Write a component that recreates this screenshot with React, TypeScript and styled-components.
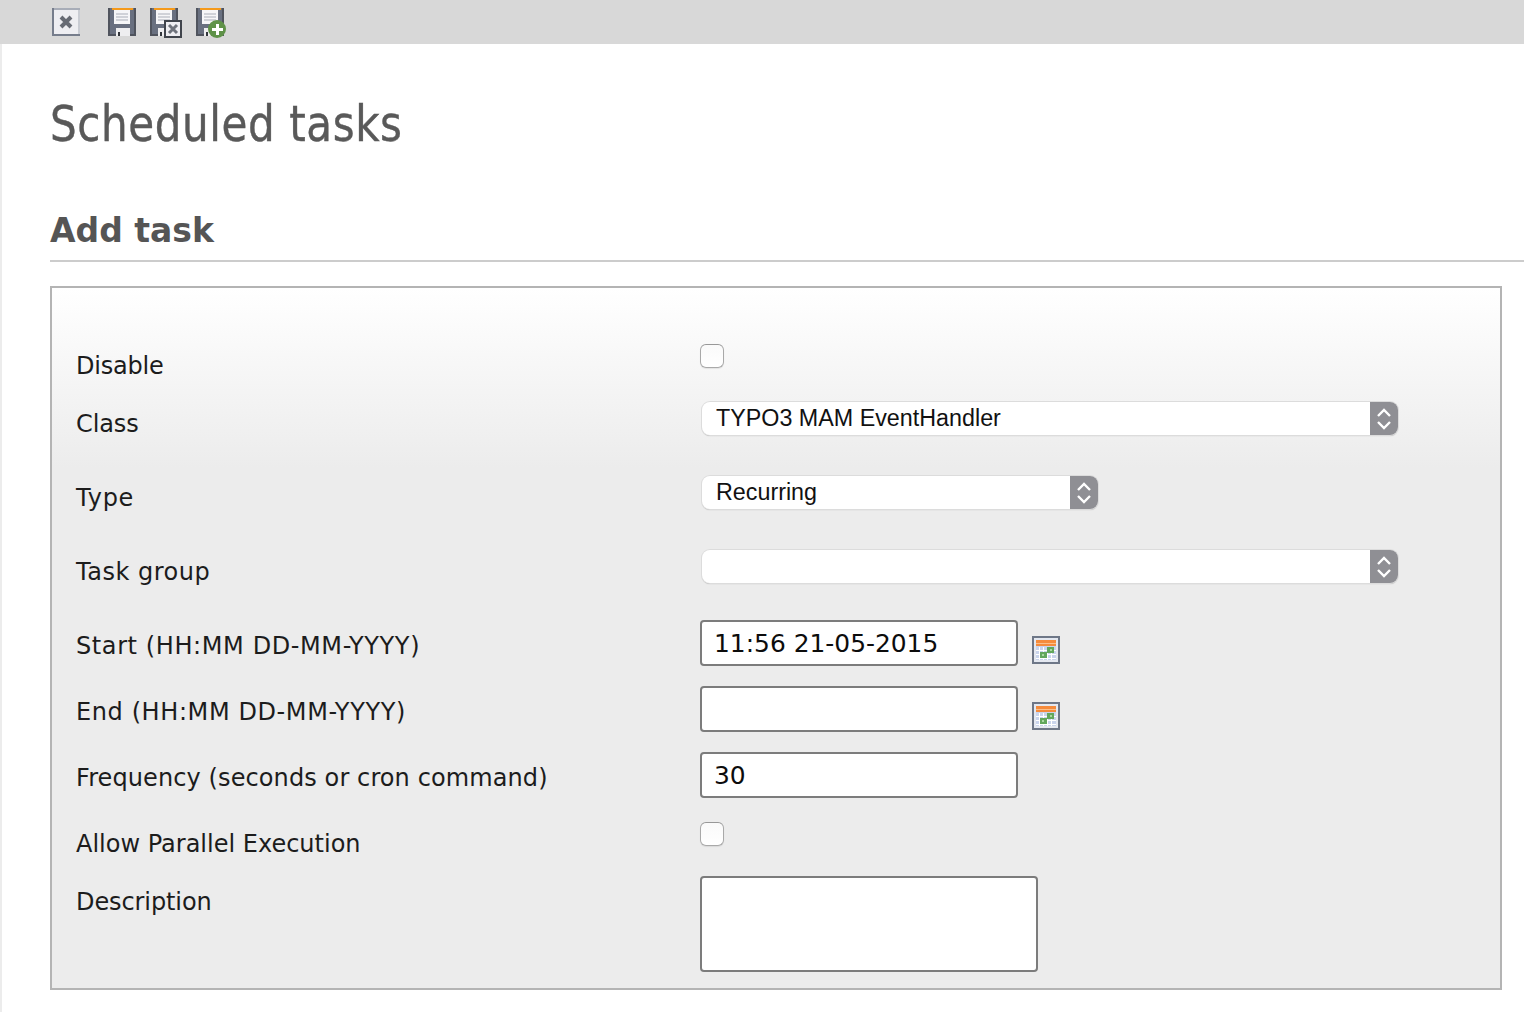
import React from "react";
import styled, { createGlobalStyle } from "styled-components";

const Global = createGlobalStyle`
  html, body { margin: 0; padding: 0; background: #fff; }
  body { font-family: "DejaVu Sans", Verdana, sans-serif; color: #111; overflow: hidden; }
`;

const Page = styled.div`
  width: 1524px;
  height: 1012px;
  display: flex;
  flex-direction: column;
  overflow: hidden;
`;

const Toolbar = styled.div`
  height: 44px;
  flex: none;
  background: #d8d8d8;
  display: flex;
  align-items: flex-start;
  padding: 8px 0 0 52px;
  box-sizing: border-box;
  gap: 14px;
`;

const CloseButton = styled.svg`
  display: block;
  margin-right: 14px;
`;

const ToolIcon = styled.svg`
  display: block;
`;

const Content = styled.div`
  flex: 1;
  border-left: 2px solid #ececec;
  padding-left: 48px;
  display: flex;
  flex-direction: column;
`;

const Title = styled.h1`
  margin: 53px 0 0;
  height: 54px;
  font-family: "DejaVu Sans Condensed", "DejaVu Sans", sans-serif;
  font-stretch: condensed;
  font-weight: 400;
  font-size: 50px;
  line-height: 54px;
  color: #595959;
  letter-spacing: 0.6px;
  -webkit-text-stroke: 0.4px #595959;
  transform: scaleX(0.936);
  transform-origin: left center;
`;

const Section = styled.h2`
  margin: 60px 0 0;
  height: 51px;
  box-sizing: border-box;
  border-bottom: 2px solid #cccccc;
  font-family: "DejaVu Sans", Verdana, sans-serif;
  font-weight: 700;
  font-size: 33px;
  line-height: 40px;
  color: #555;
`;

const Panel = styled.form`
  width: 1452px;
  height: 704px;
  margin-top: 24px;
  box-sizing: border-box;
  border: 2px solid #b4b4b4;
  background: linear-gradient(#ffffff 0, #ececec 180px);
  padding: 56px 0 0 24px;
  display: flex;
  flex-direction: column;
`;

const Row = styled.div<{ $height: number }>`
  display: grid;
  grid-template-columns: 624px 1fr;
  height: ${(p) => p.$height}px;
`;

const Label = styled.label<{ $offset: number; $tracking?: number }>`
  padding-top: ${(p) => p.$offset}px;
  font-size: 24px;
  line-height: 24px;
  letter-spacing: ${(p) => p.$tracking ?? 0.1}px;
  color: #1c1c1c;
`;

const Check = styled.input`
  appearance: none;
  display: block;
  width: 24px;
  height: 24px;
  margin: 0;
  box-sizing: border-box;
  background: linear-gradient(#fafafa, #ffffff);
  border: 1px solid #a9a9a9;
  border-top-color: #989898;
  border-radius: 6px;
  box-shadow: 0 1px 1px rgba(0, 0, 0, 0.08);
`;

const SelectBox = styled.div<{ $width: number }>`
  width: ${(p) => p.$width}px;
  height: 33px;
  margin: 1px 0 0 2px;
  display: flex;
  box-sizing: border-box;
  border-radius: 8px;
  overflow: hidden;
  background: #fff;
  box-shadow: 0 0 0 1px #dcdcdc, 0 1px 1px rgba(0, 0, 0, 0.3);
`;

const NativeSelect = styled.select`
  flex: 1;
  min-width: 0;
  appearance: none;
  border: 0;
  outline: 0;
  background: transparent;
  padding: 0 0 2px 14px;
  font-family: "Liberation Sans", Arial, sans-serif;
  font-size: 23.3px;
  color: #111;
`;

const Stepper = styled.div`
  width: 28px;
  flex: none;
  background: #8f8f94;
  display: flex;
  align-items: center;
  justify-content: center;
`;

const TextField = styled.input`
  display: block;
  width: 318px;
  height: 46px;
  box-sizing: border-box;
  margin: 0;
  padding: 0 12px;
  border: 2px solid #7c7c7c;
  border-radius: 4px;
  background: #fff;
  outline: 0;
  font-family: "DejaVu Sans", Verdana, sans-serif;
  font-size: 24.9px;
  color: #0c0c0c;
`;

const FieldLine = styled.div`
  display: flex;
  align-items: flex-start;
`;

const CalendarButton = styled.svg`
  display: block;
  margin: 16px 0 0 14px;
`;

const TextBlock = styled.textarea`
  display: block;
  width: 338px;
  height: 96px;
  box-sizing: border-box;
  margin: 0;
  border: 2px solid #7c7c7c;
  border-radius: 4px;
  background: #fff;
  outline: 0;
  resize: none;
`;

const Close = () => (
  <CloseButton width="28" height="28" viewBox="0 0 28 28">
    <g shapeRendering="crispEdges">
      <rect width="28" height="28" fill="#767d8c" />
      <rect x="2" y="0" width="26" height="2" fill="#a8adb8" />
      <rect x="26" y="2" width="2" height="24" fill="#c9ccd3" />
      <rect x="2" y="2" width="24" height="24" fill="#eeeef2" />
      <rect x="2" y="26" width="26" height="2" fill="#767d8c" />
    </g>
    <path d="M9 9l10 10M19 9 9 19" stroke="#676b74" strokeWidth="4" />
  </CloseButton>
);

const Floppy = () => (
  <g shapeRendering="crispEdges">
    <rect x="0" y="0" width="28" height="28" fill="#697080" />
    <rect x="0" y="0" width="2" height="28" fill="#50545e" />
    <rect x="26" y="0" width="2" height="28" fill="#50545e" />
    <rect x="0" y="26" width="28" height="2" fill="#50545e" />
    <rect x="4" y="0" width="21" height="2" fill="#f59a1b" />
    <rect x="6" y="2" width="16" height="14" fill="#f6f6f8" />
    <rect x="8" y="5" width="12" height="2" fill="#d0d2d8" />
    <rect x="8" y="8" width="12" height="2" fill="#d0d2d8" />
    <rect x="8" y="11" width="12" height="2" fill="#d0d2d8" />
    <rect x="8" y="20" width="14" height="8" fill="#eeeef0" />
    <rect x="10" y="24" width="2" height="4" fill="#33363c" />
  </g>
);

const Save = () => (
  <ToolIcon width="28" height="28" viewBox="0 0 28 28">
    <Floppy />
  </ToolIcon>
);

const SaveClose = () => (
  <ToolIcon width="32" height="30" viewBox="0 0 32 30">
    <Floppy />
    <rect x="14" y="12" width="18" height="18" fill="#40444c" shapeRendering="crispEdges" />
    <rect x="16" y="14" width="14" height="14" fill="#eeeef2" shapeRendering="crispEdges" />
    <path d="M19 17l8 8M27 17l-8 8" stroke="#6f737c" strokeWidth="3" />
  </ToolIcon>
);

const SaveNew = () => (
  <ToolIcon width="30" height="30" viewBox="0 0 30 30">
    <Floppy />
    <circle cx="21" cy="21" r="9" fill="#5f9248" />
    <path d="M21 15.5v11M15.5 21h11" stroke="#ffffff" strokeWidth="3" shapeRendering="crispEdges" />
  </ToolIcon>
);

const Calendar = () => (
  <CalendarButton width="28" height="28" viewBox="0 0 28 28" shapeRendering="crispEdges">
    <rect width="28" height="28" fill="#6e7787" />
    <rect x="2" y="2" width="24" height="24" fill="#e4e8f0" />
    <rect x="4" y="4" width="20" height="6" fill="#f58b3c" />
    <rect x="4" y="7" width="20" height="1" fill="#fbbf8a" />
    <rect x="4" y="10" width="20" height="14" fill="#c9d4ec" />
    <path d="M7 11v13M11 11v13M15 11v13M19 11v13M4 14h20M4 18h20M4 22h20" stroke="#fff" strokeWidth="1" />
    <rect x="8" y="16" width="7" height="6" fill="#62a75c" />
    <rect x="15" y="11" width="7" height="6" fill="#62a75c" />
    <rect x="10" y="18" width="2" height="2" fill="#a9d8a2" />
    <rect x="18" y="13" width="2" height="2" fill="#a9d8a2" />
  </CalendarButton>
);

const Chevrons = () => (
  <svg width="16" height="26" viewBox="0 0 16 26" fill="none" stroke="#fff" strokeWidth="2.4">
    <path d="M2 10 8 4l6 6" />
    <path d="M2 16l6 6 6-6" />
  </svg>
);

const Select = ({ width, value }: { width: number; value: string }) => (
  <SelectBox $width={width}>
    <NativeSelect defaultValue={value}>
      <option value={value}>{value}</option>
    </NativeSelect>
    <Stepper>
      <Chevrons />
    </Stepper>
  </SelectBox>
);

export default function App() {
  return (
    <Page>
      <Global />
      <Toolbar>
        <Close />
        <Save />
        <SaveClose />
        <SaveNew />
      </Toolbar>
      <Content>
        <Title>Scheduled tasks</Title>
        <Section>Add task</Section>
        <Panel>
          <Row $height={57}>
            <Label $offset={10} $tracking={-0.2}>Disable</Label>
            <Check type="checkbox" />
          </Row>
          <Row $height={74}>
            <Label $offset={11} $tracking={-0.1}>Class</Label>
            <Select width={696} value="TYPO3 MAM EventHandler" />
          </Row>
          <Row $height={74}>
            <Label $offset={11} $tracking={0.75}>Type</Label>
            <Select width={396} value="Recurring" />
          </Row>
          <Row $height={71}>
            <Label $offset={11} $tracking={0.5}>Task group</Label>
            <Select width={696} value="" />
          </Row>
          <Row $height={66}>
            <Label $offset={14} $tracking={0.6}>Start (HH:MM DD-MM-YYYY)</Label>
            <FieldLine>
              <TextField defaultValue="11:56 21-05-2015" />
              <Calendar />
            </FieldLine>
          </Row>
          <Row $height={66}>
            <Label $offset={14} $tracking={0.6}>End (HH:MM DD-MM-YYYY)</Label>
            <FieldLine>
              <TextField defaultValue="" />
              <Calendar />
            </FieldLine>
          </Row>
          <Row $height={70}>
            <Label $offset={14}>Frequency (seconds or cron command)</Label>
            <TextField defaultValue="30" />
          </Row>
          <Row $height={54}>
            <Label $offset={10} $tracking={0}>Allow Parallel Execution</Label>
            <Check type="checkbox" />
          </Row>
          <Row $height={96}>
            <Label $offset={14} $tracking={-0.1}>Description</Label>
            <TextBlock />
          </Row>
        </Panel>
      </Content>
    </Page>
  );
}
